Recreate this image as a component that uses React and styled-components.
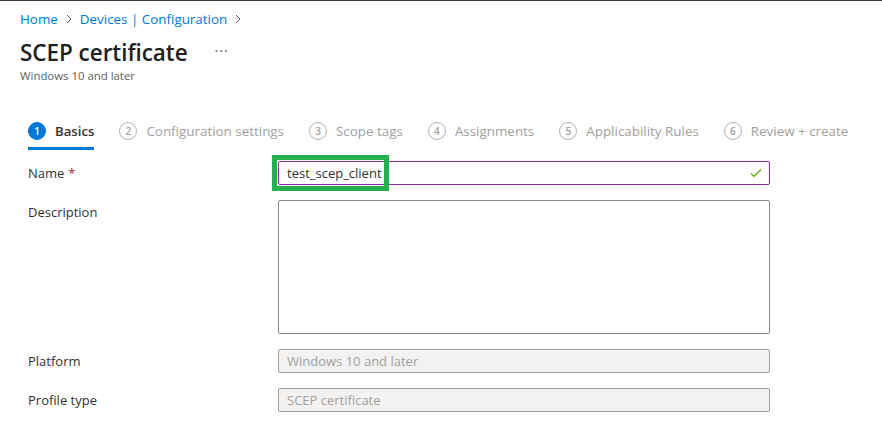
import React from 'react';
import styled, { createGlobalStyle } from 'styled-components';

const GlobalStyle = createGlobalStyle`
	html, body {
		margin: 0;
		padding: 0;
		background: #fff;
	}
	body {
		font-family: 'Open Sans', 'Noto Sans', sans-serif;
		color: #323130;
	}
`;

const Page = styled.div`
	width: 882px;
	height: 444px;
	box-sizing: border-box;
	border-top: 1px solid #3b3b3b;
	overflow: hidden;
`;

const Header = styled.div`
	padding: 8px 20px 0;
`;

const Breadcrumb = styled.nav`
	display: flex;
	align-items: center;
	gap: 5px;
	height: 20px;
	font-size: 13.4px;
	color: #0078d4;
`;

const Crumb = styled.span`
	white-space: nowrap;
`;

const Chevron = styled.svg`
	width: 12px;
	height: 12px;
`;

const TitleRow = styled.div`
	display: flex;
	align-items: center;
	margin-top: 7px;
	height: 32px;
`;

const Title = styled.h1`
	margin: 0;
	font-size: 22.5px;
	font-weight: 600;
	color: #201f1e;
	letter-spacing: -0.05px;
`;

const More = styled.span`
	margin-left: 27px;
	font-size: 14px;
	color: #605e5c;
	letter-spacing: 1px;
	position: relative;
	top: -2px;
`;

const Subtitle = styled.div`
	font-size: 11.4px;
	color: #605e5c;
	margin-top: 0;
`;

const Tabs = styled.div`
	display: flex;
	align-items: stretch;
	gap: 25px;
	margin: 32px 0 0 28px;
	height: 35px;
`;

const Tab = styled.div`
	display: flex;
	align-items: center;
	gap: 9px;
	height: 32px;
	border-bottom: 3px solid ${(p) => (p.$active ? '#0078d4' : 'transparent')};
`;

const StepNum = styled.span`
	display: flex;
	align-items: center;
	justify-content: center;
	width: 18px;
	height: 18px;
	box-sizing: border-box;
	border-radius: 50%;
	font-size: 10px;
	font-weight: 600;
	border: 1px solid ${(p) => (p.$active ? '#0078d4' : '#b3b0ad')};
	background: ${(p) => (p.$active ? '#0078d4' : '#fff')};
	color: ${(p) => (p.$active ? '#fff' : '#a19f9d')};
`;

const TabLabel = styled.span`
	font-size: ${(p) => (p.$active ? 13.2 : 13.4)}px;
	white-space: nowrap;
	font-weight: ${(p) => (p.$active ? 600 : 400)};
	color: ${(p) => (p.$active ? '#323130' : '#a19f9d')};
`;

const Form = styled.div`
	display: grid;
	grid-template-columns: 250px 492px;
	row-gap: 15px;
	margin: 11px 0 0 28px;
`;

const Label = styled.div`
	font-size: 13px;
	line-height: 24px;
	color: #323130;
`;

const Required = styled.span`
	color: #a4262c;
	margin-left: 4px;
`;

const FieldWrap = styled.div`
	position: relative;
`;

const Input = styled.div`
	display: flex;
	align-items: center;
	justify-content: space-between;
	height: 24px;
	box-sizing: border-box;
	padding: 0 7px 0 8px;
	border: 1px solid ${(p) => (p.$disabled ? '#a19f9d' : p.$valid ? '#8a2da5' : '#8a8886')};
	border-radius: 2px;
	background: ${(p) => (p.$disabled ? '#f3f2f1' : '#fff')};
	color: ${(p) => (p.$disabled ? '#a19f9d' : '#323130')};
	font-size: 13px;
	white-space: nowrap;
`;

const TextArea = styled.div`
	height: 134px;
	box-sizing: border-box;
	border: 1px solid #8a8886;
	border-radius: 2px;
	background: #fff;
`;

const Highlight = styled.div`
	position: absolute;
	left: -6px;
	top: -6px;
	width: 117px;
	height: 36px;
	box-sizing: border-box;
	border: 5px solid #22b14c;
	pointer-events: none;
`;

const steps = [
	'Basics',
	'Configuration settings',
	'Scope tags',
	'Assignments',
	'Applicability Rules',
	'Review + create',
];

const ChevronIcon = () => (
	<Chevron viewBox="0 0 12 12">
		<path d="M4 2 L8 6 L4 10" fill="none" stroke="#605e5c" strokeWidth="1" />
	</Chevron>
);

const App = () => (
	<Page>
		<GlobalStyle />
		<Header>
			<Breadcrumb>
				<Crumb>Home</Crumb>
				<ChevronIcon />
				<Crumb>Devices | Configuration</Crumb>
				<ChevronIcon />
			</Breadcrumb>
			<TitleRow>
				<Title>SCEP certificate</Title>
				<More>···</More>
			</TitleRow>
			<Subtitle>Windows 10 and later</Subtitle>
		</Header>
		<Tabs>
			{steps.map((s, i) => (
				<Tab key={s} $active={i === 0}>
					<StepNum $active={i === 0}>{i + 1}</StepNum>
					<TabLabel $active={i === 0}>{s}</TabLabel>
				</Tab>
			))}
		</Tabs>
		<Form>
			<Label>
				Name<Required>*</Required>
			</Label>
			<FieldWrap>
				<Input $valid>
					<span>test_scep_client</span>
					<svg width="12" height="10" viewBox="0 0 12 10">
						<path d="M1 5.5 L4 8.5 L11 1.5" fill="none" stroke="#57a300" strokeWidth="1.2" />
					</svg>
				</Input>
				<Highlight />
			</FieldWrap>
			<Label>Description</Label>
			<TextArea />
			<Label>Platform</Label>
			<Input $disabled>Windows 10 and later</Input>
			<Label>Profile type</Label>
			<Input $disabled>SCEP certificate</Input>
		</Form>
	</Page>
);

export default App;
